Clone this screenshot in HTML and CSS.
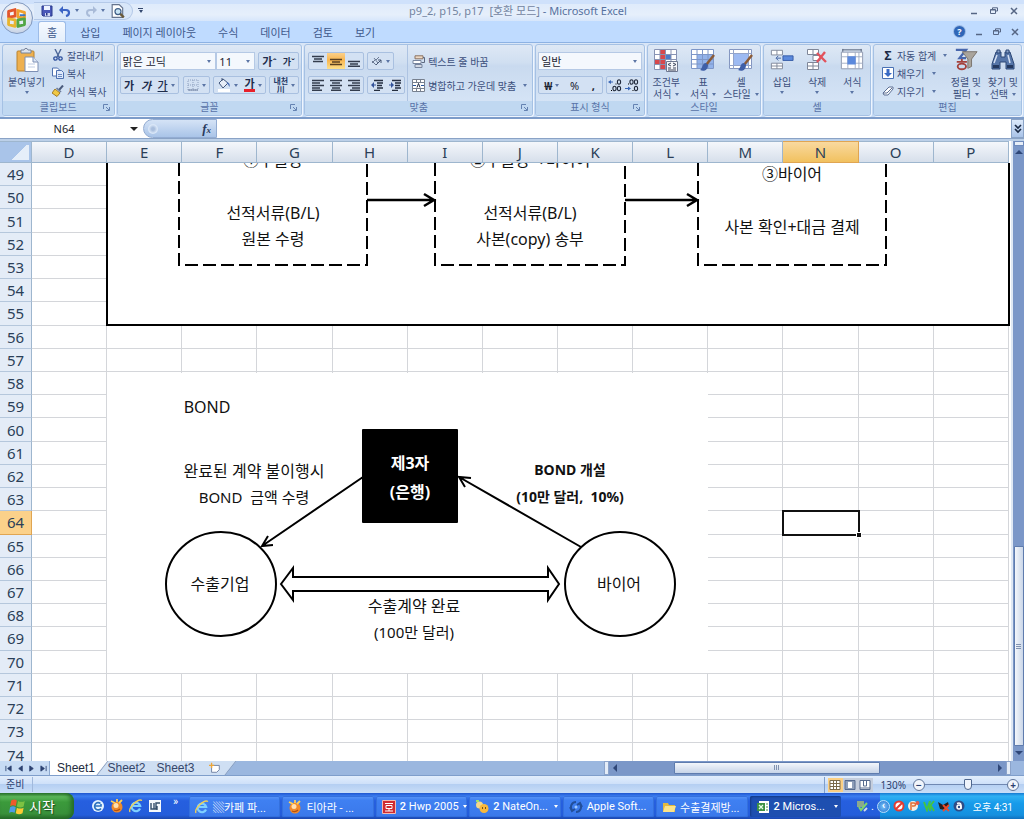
FILE: index.html
```html
<!DOCTYPE html>
<html lang="ko">
<head>
<meta charset="utf-8">
<title>p9_2, p15, p17 - Microsoft Excel</title>
<link rel="stylesheet" href="styles.css">
</head>
<body>
<svg class="defs" aria-hidden="true">
  <defs>
    <symbol id="save" viewBox="0 0 12 12"><path d="M1 1h10v10H2l-1-1z" fill="#4a58b8" stroke="#2b3a8c"/><path d="M3 1h6v4H3z" fill="#eef3ff"/><path d="M4 8h5v3H4z" fill="#cdd6f2"/><path d="M5 8h1.500v2.500H5z" fill="#26357f"/></symbol>
    <symbol id="undo" viewBox="0 0 12 12"><path d="M2 5h5c4 0 4 5 0 6" fill="none" stroke="#3b63c4" stroke-width="2.200"/><path d="M0 5l4-4v8z" fill="#3b63c4"/></symbol>
    <symbol id="redo" viewBox="0 0 12 12"><path d="M10 5H5c-4 0-4 5 0 6" fill="none" stroke="#a9bbd8" stroke-width="2"/><path d="M12 5L8 1v8z" fill="#a9bbd8"/></symbol>
    <symbol id="preview" viewBox="0 0 12 12"><path d="M1 .5h6l3 3v8H1z" fill="#fff" stroke="#66748e"/><circle cx="6" cy="6.500" r="2.600" fill="#c9e4f4" stroke="#3f5e86"/><path d="M8 8.500l3 3" stroke="#6a5a3a" stroke-width="2"/></symbol>
    <symbol id="paste" viewBox="0 0 24 24"><rect x="2" y="3" width="17" height="20" rx="1" fill="#eeb04f" stroke="#b9822f"/><path d="M6 5V2h3l1-1.500h2L13 2h3v3z" fill="#dce3ee" stroke="#77839a"/><path d="M10 9h8l5 5v9.500H10z" fill="#fff" stroke="#7c8fb4"/><path d="M18 9v5h5" fill="#dbe6f6" stroke="#7c8fb4"/><path d="M13 16h7M13 19h7" stroke="#c0cde4"/></symbol>
    <symbol id="cut" viewBox="0 0 12 12"><path d="M3 0l4 8M9 0L5 8" stroke="#4c6799" stroke-width="1.400"/><circle cx="3.500" cy="9.500" r="1.700" fill="none" stroke="#2c4f9d" stroke-width="1.300"/><circle cx="8.500" cy="9.500" r="1.700" fill="none" stroke="#2c4f9d" stroke-width="1.300"/></symbol>
    <symbol id="copy" viewBox="0 0 12 12"><path d="M.5 1h5l2 2v6h-7z" fill="#fff" stroke="#4f71b0"/><path d="M4.500 3.500h5l2 2v6h-7z" fill="#dfe9fa" stroke="#4f71b0"/><path d="M6 7.500h4M6 9.500h4" stroke="#6c8cc4"/></symbol>
    <symbol id="brush" viewBox="0 0 12 12"><path d="M7 5l4-4.500" stroke="#4b5b7c" stroke-width="2"/><path d="M3 4l5 4-3 3.500L0 8z" fill="#f1c843" stroke="#a07c26"/><path d="M4.500 3L9 7" stroke="#6e7e9c" stroke-width="1.600"/></symbol>
    <symbol id="borders" viewBox="0 0 12 12"><path d="M1 1h10v10H1zM6 1v10M1 6h10" fill="none" stroke="#8d9fbe" stroke-dasharray="1 1"/><path d="M1 11h10" stroke="#70809f"/></symbol>
    <symbol id="bucket" viewBox="0 0 14 14"><path d="M2 5l4-4 5 4-5 5z" fill="#e8eef8" stroke="#42577d"/><path d="M5 3V0" stroke="#42577d"/><path d="M10 4c3 1 3 3 2.500 5-1-1-1-3-3-4z" fill="#4c70b8"/><path d="M1 11h12v3H1z" fill="#fff"/></symbol>
    <symbol id="al-top" viewBox="0 0 12 12"><path d="M0 1.500h12M2 4h8M1 6.500h10" stroke="#333c4d" stroke-width="1.500"/></symbol>
    <symbol id="al-mid" viewBox="0 0 12 12"><path d="M0 4.500h12M2 7h8M0 9.500h12" stroke="#5a4022" stroke-width="1.500"/></symbol>
    <symbol id="al-bot" viewBox="0 0 12 12"><path d="M0 6.500h12M2 9h8M0 11.300h12" stroke="#333c4d" stroke-width="1.400"/></symbol>
    <symbol id="orient" viewBox="0 0 12 12"><path d="M1 6l4 4M3 3l4 5M1 8l4-4M5 5l3-3" fill="none" stroke="#6b7a94"/><path d="M5 10l5-5M10 8V5H7" fill="none" stroke="#445572"/></symbol>
    <symbol id="left" viewBox="0 0 12 12"><path d="M0 1.500h12M0 4h8M0 6.500h12M0 9h8M0 11.300h10" stroke="#333c4d" stroke-width="1.400"/></symbol>
    <symbol id="center" viewBox="0 0 12 12"><path d="M0 1.500h12M2 4h8M0 6.500h12M2 9h8M1 11.300h10" stroke="#333c4d" stroke-width="1.400"/></symbol>
    <symbol id="right" viewBox="0 0 12 12"><path d="M0 1.500h12M4 4h8M0 6.500h12M4 9h8M2 11.300h10" stroke="#333c4d" stroke-width="1.400"/></symbol>
    <symbol id="outdent" viewBox="0 0 12 12"><path d="M3 1.500h9M6 4h6M6 6.500h5M6 9h6M3 11.400h6" stroke="#252e40" stroke-width="1.300"/><path d="M0 6l3-3v6zM3 5.500h2v1H3z" fill="#34539a"/></symbol>
    <symbol id="indent" viewBox="0 0 12 12"><path d="M3 1.500h9M6 4h6M6 6.500h5M6 9h6M3 11.400h6" stroke="#252e40" stroke-width="1.300"/><path d="M5 6L2 3v6zM0 5.500h2v1H0z" fill="#34539a"/></symbol>
    <symbol id="wrap" viewBox="0 0 13 13"><path d="M3 .8h8v3H3z" fill="#eed9c4" stroke="#8a7262"/><path d="M1 5.500h8v3H1z" fill="#fff" stroke="#77859e"/><path d="M3 9.500h7v3H3z" fill="#d3d9e4" stroke="#77859e"/><path d="M11 2.500h1.500v5H9.500" fill="none" stroke="#5c6980"/></symbol>
    <symbol id="merge" viewBox="0 0 13 13"><path d="M.5.500h12v12H.5zM.5 3.500h12M.5 9.500h12M4.500.5v3M8.500.5v3M4.500 9.500v3M8.500 9.500v3" fill="#fff" stroke="#77808f"/><path d="M1 6.500h3M12 6.500H9" stroke="#24549c"/><path d="M5 8.500l1.500-4L8 8.500" fill="none" stroke="#222c44"/></symbol>
    <symbol id="inc-dec" viewBox="0 0 14 14"><path d="M0 4l3-2v4zM2 3.500h3v1H2z" fill="#3865b5"/><g fill="none" stroke="#222b3d" stroke-width="1.100"><ellipse cx="11" cy="4" rx="1.600" ry="2.200"/><ellipse cx="6.500" cy="10.500" rx="1.600" ry="2.200"/><ellipse cx="11" cy="10.500" rx="1.600" ry="2.200"/></g><path d="M7.500 5.500h1v1h-1zM3 12h1v1H3z"/></symbol>
    <symbol id="dec-dec" viewBox="0 0 14 14"><path d="M6 10.500l-3-2v4zM0 10h3v1H0z" fill="#3865b5"/><g fill="none" stroke="#222b3d" stroke-width="1.100"><ellipse cx="6.500" cy="4" rx="1.600" ry="2.200"/><ellipse cx="11" cy="4" rx="1.600" ry="2.200"/><ellipse cx="11" cy="10.500" rx="1.600" ry="2.200"/></g><path d="M3 5.500h1v1H3zM7.500 12h1v1h-1z"/></symbol>
    <symbol id="cond" viewBox="0 0 24 24"><path d="M.5 1.500h22v20H.5z" fill="#fff"/><path d="M6 1.500h5v20H6z" fill="#d8484c"/><path d="M.5 11.500h6v5h-6z" fill="#d8484c"/><path d="M11 6h6v6h-6z" fill="#4c7cc8"/><path d="M.5 1.500h22v20H.5zM.5 6.500h22M.5 11.500h22M.5 16.500h22M6 1.500v20M11.500 1.500v20M17 1.500v20" fill="none" stroke="#8793b4"/><path d="M12.500 13.500h11v10h-11z" fill="#f5f6fa" stroke="#6e7890"/><path d="M17 15l-3 1.500 3 1.500M14 20h3M19 15l3 1.500-3 1.500M19 20h3M14 22h8" fill="none" stroke="#3c455a"/></symbol>
    <symbol id="tablefmt" viewBox="0 0 24 24"><path d="M.5 1.500h22v19H.5z" fill="#fff"/><path d="M6 6h16v15H6z" fill="#92b2ea"/><path d="M.5 1.500h22v19H.5zM.5 6.500h22M.5 11.500h22M.5 16h22M6 1.500v19M11.500 1.500v19M17 1.500v19" fill="none" stroke="#7d96c8"/><path d="M23 7l-8 10" stroke="#8b5b37" stroke-width="2.500"/><path d="M15 15c-4 0-3 5-6 7 4 2 8 0 8-5z" fill="#3f5fa8"/></symbol>
    <symbol id="cellstyle" viewBox="0 0 24 24"><path d="M.5 1.500h22v19H.5z" fill="#fff" stroke="#8496c0"/><path d="M.5 5.500h22M.5 17.500h22M4.500 1.500v19M19.500 1.500v19" stroke="#93a4ca"/><path d="M5 6h14v11H5z" fill="#9dbaf2"/><path d="M23 7l-8 10" stroke="#8b5b37" stroke-width="2.500"/><path d="M15 15c-4 0-3 5-6 7 4 2 8 0 8-5z" fill="#3f5fa8"/></symbol>
    <symbol id="insert" viewBox="0 0 26 24"><path d="M1.500 1.500h12v5h-12zM1.500 15.500h12v6h-12zM7.500 1.500v5M7.500 15.500v6M1.500 18.500h12" fill="#fff" stroke="#7f8798"/><path d="M14 7.500h11v5H14z" fill="#5b89dc" stroke="#355ba6"/><path d="M12 10H7M9 7.500L6.500 10 9 12.500" fill="none" stroke="#3c5d9e"/></symbol>
    <symbol id="delete" viewBox="0 0 24 24"><path d="M2.500 1.500h11v5h-11zM8 7.500h7v5H8zM2.500 14.500h11v7h-11zM8 1.500v5M8 14.500v7M2.500 18h11" fill="#fff" stroke="#7f8798"/><path d="M12 5l9 9M20 4l-8 10" stroke="#e2525c" stroke-width="2.400"/></symbol>
    <symbol id="format" viewBox="0 0 26 24"><path d="M1.500 3.500h23v18h-23z" fill="#fff" stroke="#8b96ac"/><path d="M1.500 8.500h23M1.500 15.500h23M8.500 3.500v18M16.500 3.500v18M20.500 3.500v18" stroke="#a0abc2"/><path d="M8 8h9v9H8z" fill="#5b89dc"/><path d="M3 1h20M3 0v3M23 0v3" stroke="#4c5870"/></symbol>
    <symbol id="fill" viewBox="0 0 12 12"><path d="M.5.500h11v11H.5z" fill="#fff" stroke="#4971b4"/><path d="M4.500 2h3v4H10l-4 4-4-4h2.500z" fill="#3a6bc4"/></symbol>
    <symbol id="eraser" viewBox="0 0 12 12"><path d="M1 8l6-6h4v2L6 10H2z" fill="#fff" stroke="#5c6f94"/><path d="M1 8h4l5-5" fill="none" stroke="#5c6f94"/></symbol>
    <symbol id="sort" viewBox="0 0 26 26"><path d="M2 2h11L6 11h7" fill="none" stroke="#4867ad" stroke-width="2.500"/><path d="M9 4h16l-6 8v8l-4 2v-10z" fill="#a9a49c" stroke="#77716a"/><path d="M3 15h11M8.500 12v3" stroke="#a4423c" stroke-width="2"/><ellipse cx="8.500" cy="20" rx="4.500" ry="3" fill="none" stroke="#a4423c" stroke-width="2"/></symbol>
    <symbol id="find" viewBox="0 0 24 24"><path d="M5 4h5v5h4V4h5l4 12v5h-8v-7H9v7H1v-5z" fill="#5575a8" stroke="#2d4877"/><path d="M6 2h3v3H6zM15 2h3v3h-3z" fill="#8ca4cb" stroke="#2d4877"/><path d="M3 15l3-8M17 7l2 8" stroke="#d4e0f3" stroke-width="1.500"/><path d="M2 17h6v3H2zM16 17h6v3h-6z" fill="#24395f"/></symbol>
    <symbol id="launch" viewBox="0 0 7 7"><path d="M.5 5V.5H5M3 3l3 3M6.500 3v3.500H3" fill="none" stroke="#6583b2"/></symbol>
    <symbol id="min" viewBox="0 0 8 8"><path d="M1 6.500h6" stroke="#566684" stroke-width="1.500"/></symbol>
    <symbol id="restore" viewBox="0 0 8 8"><path d="M2.500 2V.8h5V4H6M.5 2.500h5v4h-5zM.5 3h5" fill="none" stroke="#566684"/></symbol>
    <symbol id="close" viewBox="0 0 8 8"><path d="M1 1l6 6M7 1L1 7" stroke="#566684" stroke-width="1.500"/></symbol>
    <symbol id="ie" viewBox="0 0 14 14"><path d="M11 9.500A4.300 4.300 0 1 1 11.200 7H4" fill="none" stroke="#7fd0ff" stroke-width="2.200"/><path d="M1 13C-1 9 9-1 13 1.500" fill="none" stroke="#f2cf55" stroke-width="1.300"/></symbol>
    <symbol id="orange" viewBox="0 0 14 14"><circle cx="7" cy="8" r="5.500" fill="#f08a2c"/><circle cx="6" cy="6.500" r="2.500" fill="#ffe0b0"/><path d="M1 2l4 2M7 0v3M12 1L9 4" stroke="#ffcf54" stroke-width="1.800"/><path d="M4 11c2 1 4 1 6-1" fill="none" stroke="#b4510f" stroke-width="1.200"/></symbol>
    <symbol id="globe" viewBox="0 0 14 14"><circle cx="7" cy="7" r="6" fill="#e5f3ff"/><path d="M9.500 4.500A3.600 3.600 0 1 0 10 9.500M4 7h6V5" fill="none" stroke="#2c72be" stroke-width="1.600"/></symbol>
    <symbol id="wave" viewBox="0 0 14 14"><path d="M1 1h12v12H1z" fill="#f5f8fb"/><path d="M3 4v6h3V4M6 10h2V4h4M9 7v4" fill="none" stroke="#334d68" stroke-width="1.400"/></symbol>
    <symbol id="hwp" viewBox="0 0 14 14"><path d="M.5.500h13v13H.5z" fill="#cf2c31" stroke="#f3b9b0"/><path d="M3 3.500h8M4 5.500h6v3H4zM3 11h8M7 8.500V11" fill="none" stroke="#fff"/></symbol>
    <symbol id="nate" viewBox="0 0 14 14"><circle cx="4.500" cy="5" r="3.500" fill="#f4d88c"/><circle cx="9" cy="8.500" r="4.500" fill="#f8b83c"/><path d="M7 8h1M10 8h1" stroke="#4b3210" stroke-width="1.500"/><path d="M1 1h3" stroke="#9fe26a" stroke-width="2"/></symbol>
    <symbol id="apple" viewBox="0 0 14 14"><path d="M3 10A5 5 0 0 1 7 2M11 4a5 5 0 0 1-4 8M1 7l2 4 3-2M13 7l-2-4-3 2" fill="none" stroke="#224f9b" stroke-width="2"/><circle cx="7" cy="7" r="1.500" fill="#9ac6ff"/></symbol>
    <symbol id="folder" viewBox="0 0 14 14"><path d="M1 3h5l1 2h6v7H1z" fill="#e2b93f"/><path d="M3 6h11l-2 6H1z" fill="#fbe38a"/></symbol>
    <symbol id="excel" viewBox="0 0 14 14"><path d="M3 1h10v12H3z" fill="#fff"/><path d="M1 3h8v8H1z" fill="#3d9145"/><path d="M3 5l4 4M7 5L3 9" stroke="#e8ffe8" stroke-width="1.300"/><path d="M10 4h2M10 7h2M10 10h2" stroke="#3d9145"/></symbol>
    <symbol id="winflag" viewBox="0 0 16 16"><path d="M2 3c2-1 3-1 5 0L6 8C4 7 3 7 1 8z" fill="#ee5a2b"/><path d="M8 3.500c2 1 4 1 6 0l-1 5c-2 1-4 1-6 0z" fill="#7dc242"/><path d="M1 9c2-1 3-1 5 0l-1 5c-2-1-3-1-5 0z" fill="#4d9be8"/><path d="M7 9.500c2 1 4 1 6 0l-1 5c-2 1-4 1-6 0z" fill="#fcca34"/></symbol>
    <symbol id="t-pen" viewBox="0 0 12 12"><path d="M1 1h7v6H1z" fill="#8aa88e"/><path d="M3 7l2 3 6-7" fill="none" stroke="#7ed36e" stroke-width="2"/><path d="M8 11l3-3" stroke="#d2d9e8" stroke-width="2"/></symbol>
    <symbol id="t-no" viewBox="0 0 12 12"><circle cx="6" cy="6" r="4.500" fill="#fff" stroke="#e43b31" stroke-width="2"/><path d="M3 9l6-6" stroke="#e43b31" stroke-width="2"/></symbol>
    <symbol id="t-paint" viewBox="0 0 12 12"><circle cx="5" cy="6" r="5" fill="#f6efe2"/><path d="M3 10V3h3c2 0 2 3 0 3H4" fill="none" stroke="#e06f32" stroke-width="1.500"/><circle cx="9.500" cy="3" r="2" fill="#e75b47"/></symbol>
    <symbol id="t-v" viewBox="0 0 12 12"><path d="M1 2l3 8 3-9M7 11V6l4-5M8 6l3 5" fill="none" stroke="#43c443" stroke-width="2"/></symbol>
    <symbol id="t-x" viewBox="0 0 12 12"><path d="M0 2l5 3 5-3 1 4-4 4-5-1z" fill="#2a1d1d"/><path d="M5 5l6 6M11 5l-6 6" stroke="#ef4b2c" stroke-width="1.800"/></symbol>
    <symbol id="t-a" viewBox="0 0 12 12"><circle cx="6" cy="6" r="5.500" fill="#2f4c86"/><circle cx="6" cy="7" r="2" fill="none" stroke="#fff" stroke-width="1.500"/><path d="M4 3.500c3-1 4 0 4 2V9" fill="none" stroke="#fff" stroke-width="1.500"/></symbol>
    <symbol id="newtab" viewBox="0 0 14 12"><path d="M3 3h9v5l-3 3H3z" fill="#fff" stroke="#67799c"/><path d="M3 0v6M0 3h6" stroke="#eda63a" stroke-width="1.500"/></symbol>
  </defs>
</svg>

<div class="app">
  <header class="chrome">
    <button class="orb" aria-label="Office 단추"><svg viewBox="0 0 32 32"><g fill="none" stroke-width="3" stroke-linejoin="round"><path d="M7 9l7-2v7l-7 1z" stroke="#e2562b"/><path d="M17 8l7 2v6l-7-1z" stroke="#f0a02c"/><path d="M7 17l7 1v7l-7-2z" stroke="#e8b42f"/><path d="M17 18l7-1v6l-7 2z" stroke="#52a645"/></g><path d="M19 13h6" stroke="#3c78c8" stroke-width="2"/></svg></button>
    <div class="titlebar">
      <div class="qat">
        <button aria-label="저장"><svg class="i12"><use href="#save"/></svg></button>
        <button class="dd" aria-label="실행 취소"><svg class="i12"><use href="#undo"/></svg></button>
        <button class="dd dim" aria-label="다시 실행"><svg class="i12"><use href="#redo"/></svg></button>
        <button aria-label="인쇄 미리 보기"><svg class="i14"><use href="#preview"/></svg></button>
      </div>
      <button class="qat-more" aria-label="빠른 실행 도구 모음 사용자 지정"></button>
      <h1 class="title"><span class="doc">p9_2, p15, p17&nbsp; [호환 모드]</span> - Microsoft Excel</h1>
      <div class="winbtns">
        <button aria-label="최소화"><svg class="i8"><use href="#min"/></svg></button>
        <button aria-label="이전 크기로"><svg class="i8"><use href="#restore"/></svg></button>
        <button aria-label="닫기"><svg class="i8"><use href="#close"/></svg></button>
      </div>
    </div>
    <nav class="tabs">
      <button class="tab active">홈</button>
      <button class="tab">삽입</button>
      <button class="tab">페이지 레이아웃</button>
      <button class="tab">수식</button>
      <button class="tab">데이터</button>
      <button class="tab">검토</button>
      <button class="tab">보기</button>
      <div class="winbtns inner">
        <button aria-label="도움말" class="help">?</button>
        <button aria-label="창 최소화"><svg class="i8"><use href="#min"/></svg></button>
        <button aria-label="창 복원"><svg class="i8"><use href="#restore"/></svg></button>
        <button aria-label="창 닫기"><svg class="i8"><use href="#close"/></svg></button>
      </div>
    </nav>
  </header>

  <section class="ribbon" aria-label="홈">
    <div class="group g-clip">
      <div class="body">
        <button class="big"><svg class="i24"><use href="#paste"/></svg><span>붙여넣기</span><i class="caret"></i></button>
        <div class="stack">
          <button class="small"><svg class="i12"><use href="#cut"/></svg>잘라내기</button>
          <button class="small"><svg class="i12"><use href="#copy"/></svg>복사</button>
          <button class="small"><svg class="i12"><use href="#brush"/></svg>서식 복사</button>
        </div>
      </div>
      <div class="cap">클립보드<svg class="launch"><use href="#launch"/></svg></div>
    </div>
    <div class="group g-font">
      <div class="body rows">
        <div class="row">
          <span class="sel grow"><select aria-label="글꼴"><option>맑은 고딕</option></select></span>
          <span class="sel size"><select aria-label="글꼴 크기"><option>11</option></select></span>
          <div class="set push"><button class="glyph up" aria-label="글꼴 크기 크게">가</button><button class="glyph down" aria-label="글꼴 크기 작게">가</button></div>
        </div>
        <div class="row spread">
          <div class="set"><button class="glyph bold">가</button><button class="glyph ital">가</button><button class="glyph und dd">가</button></div>
          <div class="set"><button class="dd" aria-label="테두리"><svg class="i12"><use href="#borders"/></svg></button></div>
          <div class="set"><button class="dd" aria-label="채우기 색"><svg class="i14"><use href="#bucket"/></svg></button><button class="glyph red dd"><span>가</span></button></div>
          <div class="set"><button class="ruby dd"><span>내천</span><span>川</span></button></div>
        </div>
      </div>
      <div class="cap">글꼴<svg class="launch"><use href="#launch"/></svg></div>
    </div>
    <div class="group g-align">
      <div class="body">
        <div class="rows">
          <div class="row">
            <div class="set"><button aria-label="위쪽 맞춤"><svg class="i12"><use href="#al-top"/></svg></button><button class="on" aria-label="가운데 맞춤"><svg class="i12"><use href="#al-mid"/></svg></button><button aria-label="아래쪽 맞춤"><svg class="i12"><use href="#al-bot"/></svg></button></div>
            <div class="set"><button class="dd" aria-label="방향"><svg class="i12"><use href="#orient"/></svg></button></div>
          </div>
          <div class="row">
            <div class="set"><button aria-label="왼쪽"><svg class="i12"><use href="#left"/></svg></button><button aria-label="가운데"><svg class="i12"><use href="#center"/></svg></button><button aria-label="오른쪽"><svg class="i12"><use href="#right"/></svg></button></div>
            <div class="set"><button aria-label="내어쓰기"><svg class="i12"><use href="#outdent"/></svg></button><button aria-label="들여쓰기"><svg class="i12"><use href="#indent"/></svg></button></div>
          </div>
        </div>
        <div class="rows sep">
          <div class="row"><button class="small"><svg class="i13"><use href="#wrap"/></svg>텍스트 줄 바꿈</button></div>
          <div class="row"><button class="small dd"><svg class="i13"><use href="#merge"/></svg>병합하고 가운데 맞춤</button></div>
        </div>
      </div>
      <div class="cap">맞춤<svg class="launch"><use href="#launch"/></svg></div>
    </div>
    <div class="group g-num">
      <div class="body rows">
        <div class="row"><span class="sel grow"><select aria-label="표시 형식"><option>일반</option></select></span></div>
        <div class="row spread">
          <div class="set num"><button class="dd strong">₩</button><button>%</button><button class="strong">,</button></div>
          <div class="set"><button aria-label="자릿수 늘림"><svg class="i14"><use href="#inc-dec"/></svg></button><button aria-label="자릿수 줄임"><svg class="i14"><use href="#dec-dec"/></svg></button></div>
        </div>
      </div>
      <div class="cap">표시 형식<svg class="launch"><use href="#launch"/></svg></div>
    </div>
    <div class="group g-style">
      <div class="body even">
        <button class="big"><svg class="i24"><use href="#cond"/></svg><span>조건부</span><span class="dd">서식</span></button>
        <button class="big"><svg class="i24"><use href="#tablefmt"/></svg><span>표</span><span class="dd">서식</span></button>
        <button class="big"><svg class="i24"><use href="#cellstyle"/></svg><span>셀</span><span class="dd">스타일</span></button>
      </div>
      <div class="cap">스타일</div>
    </div>
    <div class="group g-cell">
      <div class="body even">
        <button class="big"><svg class="i24"><use href="#insert"/></svg><span>삽입</span><i class="caret"></i></button>
        <button class="big"><svg class="i24"><use href="#delete"/></svg><span>삭제</span><i class="caret"></i></button>
        <button class="big"><svg class="i24"><use href="#format"/></svg><span>서식</span><i class="caret"></i></button>
      </div>
      <div class="cap">셀</div>
    </div>
    <div class="group g-edit">
      <div class="body">
        <div class="stack">
          <button class="small dd"><b class="sigma">Σ</b>자동 합계</button>
          <button class="small dd"><svg class="i12"><use href="#fill"/></svg>채우기</button>
          <button class="small dd"><svg class="i12"><use href="#eraser"/></svg>지우기</button>
        </div>
        <button class="big"><svg class="i24"><use href="#sort"/></svg><span>정렬 및</span><span class="dd">필터</span></button>
        <button class="big"><svg class="i24"><use href="#find"/></svg><span>찾기 및</span><span class="dd">선택</span></button>
      </div>
      <div class="cap">편집</div>
    </div>
  </section>

  <div class="formula">
    <input class="namebox" aria-label="이름 상자" value="N64">
    <i class="caret dark"></i>
    <button class="fx" aria-label="함수 삽입"><span class="knob"></span><em>f<small>x</small></em></button>
    <input class="fbar" aria-label="수식 입력줄">
    <button class="expand" aria-label="수식 입력줄 확장"><svg viewBox="0 0 8 10"><path d="M1 1l3 3 3-3M1 5l3 3 3-3" fill="none" stroke="#1b2a45" stroke-width="1.600"/></svg></button>
  </div>

  <main class="work">
    <div class="sheet">
      <table class="grid"><thead><tr id="cols"></tr></thead></table>
      <div class="cells">
        <table class="grid rowsgrid"><tbody id="rows"></tbody></table>
        <svg class="drawing" width="980" height="600" viewBox="32 163 980 600">
          <rect x="107" y="150" width="902" height="175" fill="#fff" stroke="#000" stroke-width="2"/>
          <rect x="107" y="373" width="601" height="300" fill="#fff"/>
          <g fill="none" stroke="#000" stroke-width="2" stroke-dasharray="13 5">
            <path d="M179 163v102h188V163M435 163v102h190V163M698 163v102h188V163"/>
          </g>
          <g fill="none" stroke="#000" stroke-width="2.500">
            <path d="M367 200h66M424 194l10 6-10 6M625 200h71M687 194l10 6-10 6"/>
          </g>
          <g fill="none" stroke="#000" stroke-width="2">
            <path d="M363 477L262 546M268 536l-6 10 11-1M581 547L459 477M465 487l-6-10 12 1"/>
            <ellipse cx="221" cy="584" rx="55" ry="52"/>
            <ellipse cx="620" cy="584" rx="55" ry="52"/>
            <path d="M281 584l12-16v9h255v-9l11 16-11 16v-9H293v9z"/>
          </g>
          <rect x="362" y="429" width="96" height="94" rx="1"/>
          <g class="dtext" text-anchor="middle">
            <text x="273" y="166">①수출상</text>
            <text x="530" y="166">②수출상→바이어</text>
            <text x="273" y="219">선적서류(B/L)</text>
            <text x="273" y="245">원본 수령</text>
            <text x="530" y="219">선적서류(B/L)</text>
            <text x="530" y="245">사본(copy) 송부</text>
            <text x="792" y="180">③바이어</text>
            <text x="792" y="233">사본 확인+대금 결제</text>
            <text x="207" y="413">BOND</text>
            <text x="254" y="477">완료된 계약 불이행시</text>
            <text x="254" y="503" class="s15">BOND&#160; 금액 수령</text>
            <text x="220" y="590">수출기업</text>
            <text x="619" y="590">바이어</text>
            <text x="414" y="612">수출계약 완료</text>
            <text x="414" y="638" class="s15">(100만 달러)</text>
            <text x="570" y="475" class="s14">BOND 개설</text>
            <text x="570" y="502" class="s14">(10만 달러,&#160; 10%)</text>
            <text x="410" y="469" class="inv">제3자</text>
            <text x="410" y="498" class="inv">(은행)</text>
          </g>
        </svg>
      </div>
    </div>
    <div class="vscroll"><span class="split"></span><i class="arr up"></i><span class="vtrack"><span class="vthumb"></span></span><i class="arr down"></i></div>
  </main>

  <div class="sheetbar">
    <div class="navs">
      <button aria-label="처음"><svg viewBox="0 0 8 8"><path d="M1 1v6M7 1L3 4l4 3z"/></svg></button>
      <button aria-label="이전"><svg viewBox="0 0 8 8"><path d="M6 1L2 4l4 3z"/></svg></button>
      <button aria-label="다음"><svg viewBox="0 0 8 8"><path d="M2 1l4 3-4 3z"/></svg></button>
      <button aria-label="마지막"><svg viewBox="0 0 8 8"><path d="M1 1l4 3-4 3zM7 1v6"/></svg></button>
    </div>
    <button class="stab active"><span>Sheet1</span></button>
    <button class="stab"><span>Sheet2</span></button>
    <button class="stab"><span>Sheet3</span></button>
    <button class="stab new" aria-label="워크시트 삽입"><span><svg class="i12"><use href="#newtab"/></svg></span></button>
    <div class="filler"></div>
    <div class="hscroll"><span class="grip"></span><i class="arr lft"></i><span class="htrack"><span class="hthumb"></span></span><i class="arr rgt"></i><span class="grip"></span></div>
  </div>

  <footer class="status">
    <span class="ready">준비</span>
    <div class="views">
      <button class="on" aria-label="기본"><svg viewBox="0 0 14 12"><path d="M2 1.500h10v9H2zM2 4.500h10M2 7.500h10M5.500 1.500v9M8.500 1.500v9" fill="#fff" stroke="#79684a"/></svg></button>
      <button aria-label="페이지 레이아웃"><svg viewBox="0 0 14 12"><path d="M2 1.500h10v9H2z" fill="#8e9eb8" stroke="#566a8e"/><path d="M5 3h4v6H5z" fill="#fff"/></svg></button>
      <button aria-label="페이지 나누기"><svg viewBox="0 0 14 12"><path d="M2 1.500h10v9H2z" fill="#fff" stroke="#566a8e"/><path d="M5.500 1v6h3V1M2 9h10" fill="none" stroke="#566a8e"/></svg></button>
    </div>
    <span class="pct">130%</span>
    <button class="zoom" aria-label="축소">−</button>
    <input class="slider" type="range" min="0" max="100" value="53" aria-label="확대/축소">
    <button class="zoom" aria-label="확대">+</button>
  </footer>

  <nav class="taskbar">
    <button class="start"><svg class="i16"><use href="#winflag"/></svg>시작</button>
    <div class="quick">
      <button aria-label="바탕 화면 보기"><svg class="i14"><use href="#globe"/></svg></button>
      <button aria-label="알약"><svg class="i14"><use href="#orange"/></svg></button>
      <button aria-label="Internet Explorer"><svg class="i14"><use href="#ie"/></svg></button>
      <button aria-label="편집기"><svg class="i14"><use href="#wave"/></svg></button>
      <span class="more">»</span>
    </div>
    <div class="tasks">
      <button class="task"><svg class="i14"><use href="#ie"/></svg><span>▒카페 파...</span></button>
      <button class="task"><svg class="i14"><use href="#orange"/></svg><span>티아라 - ...</span></button>
      <button class="task dd"><svg class="i14"><use href="#hwp"/></svg><span><b>2</b> Hwp 2005</span></button>
      <button class="task dd"><svg class="i14"><use href="#nate"/></svg><span><b>2</b> NateOn...</span></button>
      <button class="task"><svg class="i14"><use href="#apple"/></svg><span>Apple Soft...</span></button>
      <button class="task"><svg class="i14"><use href="#folder"/></svg><span>수출결제방...</span></button>
      <button class="task dd current"><svg class="i14"><use href="#excel"/></svg><span><b>2</b> Micros...</span></button>
    </div>
    <div class="lang"><svg class="i12"><use href="#t-pen"/></svg><span>.</span></div>
    <div class="tray">
      <button class="chev" aria-label="숨겨진 아이콘 표시">‹</button>
      <svg class="i12"><use href="#t-no"/></svg><svg class="i12"><use href="#t-paint"/></svg><svg class="i12"><use href="#t-v"/></svg><svg class="i12"><use href="#t-x"/></svg><svg class="i12"><use href="#t-a"/></svg>
      <time>오후 4:31</time>
    </div>
  </nav>
</div>
<script src="grid.js"></script>
</body>
</html>
```

FILE: styles.css
```css
* { box-sizing: border-box; }
body { margin: 0; font-family: "Noto Sans", "Noto Sans CJK KR", sans-serif; font-size: 11px; color: #3c4f7c; }
button, input, select { font: inherit; color: inherit; border: 0; background: none; padding: 0; margin: 0; min-width: 0; border-radius: 0; outline: 0; }
button { display: flex; align-items: center; justify-content: center; white-space: nowrap; cursor: default; }
svg { display: block; flex: none; }
.defs { position: absolute; width: 0; height: 0; }
.i8 { width: 8px; height: 8px; }
.i12 { width: 12px; height: 12px; }
.i13 { width: 13px; height: 13px; }
.i14 { width: 14px; height: 14px; }
.i16 { width: 18px; height: 18px; }
.i24 { width: 24px; height: 24px; }
.app { display: flex; flex-direction: column; height: 100vh; min-height: 400px; overflow: hidden; background: #bfdbff; }

.caret, .dd::after { content: ""; display: block; flex: none; border: 2px solid transparent; border-top: 3px solid #5b75a5; border-bottom: 0; }
.dd::after { margin-left: 4px; }

/* title bar and tabs */
.chrome { position: relative; flex: none; }
.orb { position: absolute; left: 1px; top: 2px; width: 32px; height: 32px; border-radius: 50%; background: radial-gradient(circle at 50% 30%, #fff, #dce4f0 60%, #b5c4dc); border: 1px solid #8199bf; z-index: 1; }
.orb svg { width: 30px; height: 30px; }
.titlebar { display: flex; align-items: center; height: 21px; padding-left: 34px; background: linear-gradient(#cfe1fb 0 18%, #dfebfb 20%, #e6effb 70%, #d6e6fb); }
.qat { display: flex; align-items: center; gap: 6px; height: 18px; width: 99px; padding-left: 7px; border: 1px solid #b4c9e8; border-left: 0; border-radius: 0 9px 9px 0; background: #d9e7f9; }
.qat-more { width: 5px; height: 6px; margin-left: 5px; border-top: 1px solid #33476e; }
.qat-more::after { content: ""; border: 2px solid transparent; border-top: 3px solid #33476e; border-bottom: 0; }
.title { flex: 1; margin: 0; font-size: 11px; font-weight: 400; line-height: 20px; text-align: center; color: #56719f; padding-right: 143px; white-space: pre; }
.doc { color: #7384a0; }
.winbtns { display: flex; gap: 12px; padding-right: 6px; align-items: center; }
.winbtns.inner { margin-left: auto; padding-right: 5px; gap: 10px; }
.titlebar .winbtns { margin-left: -66px; }
.help { width: 11px; height: 11px; border-radius: 50%; background: #2f66b8; color: #fff; font-size: 9px; font-weight: 700; box-shadow: 0 0 0 1px #9bb9e4; }
.tabs { display: flex; height: 21px; padding-left: 38px; background: #bfdbff; color: #40588c; }
.tab { height: 21px; padding: 0 11px; }
.tab.active { margin-right: 3px; padding: 0 8px; border: 1px solid #9dbce8; border-bottom: 0; border-radius: 3px 3px 0 0; background: linear-gradient(#f6faff, #e3eefb); }

/* ribbon */
.ribbon { display: flex; gap: 2px; flex: none; height: 77px; padding: 1px 2px; border-top: 1px solid #8db2e3; border-bottom: 2px solid #7d9cc9; background: linear-gradient(#d9e6f7, #c4daf5); font-size: 10px; }
.group { display: flex; flex-direction: column; border: 1px solid #a5c1e4; border-radius: 3px; box-shadow: 1px 1px 0 #eef5fe; overflow: hidden; background: linear-gradient(#dee8f5, #d0dff1 25%, #c9daef 30%, #d9e7f8); }
.g-clip { flex: 112 1 0; }
.g-font { flex: 186 1 0; }
.g-align { flex: 230 1 0; }
.g-num { flex: 109 1 0; }
.g-style { flex: 114 1 0; }
.g-cell { flex: 107 1 0; }
.g-edit { flex: 149 1 0; }
.body { display: flex; flex: 1; min-height: 0; padding: 0 3px; }
.cap { position: relative; flex: none; height: 14px; line-height: 13px; text-align: center; color: #5873a8; background: #c0d8f1; }
.launch { position: absolute; right: 4px; top: 3px; width: 7px; height: 7px; }
.big { flex-direction: column; justify-content: flex-start; line-height: 12px; padding-top: 3px; min-width: 41px; }
.big > svg { margin-bottom: 4px; }
.big .caret { margin-top: 3px; }
.big .dd { display: flex; align-items: center; }
.even { justify-content: space-around; padding: 0; }
.even .big { min-width: 34px; }
.stack { display: flex; flex-direction: column; padding: 1px 0 0 5px; }
.small { height: 18px; gap: 3px; justify-content: flex-start; }
.g-edit .stack { padding-left: 5px; margin-right: auto; }
.g-edit .big { min-width: 37px; }
.sigma { width: 12px; text-align: center; font-size: 12px; color: #1b2a45; }
.rows { display: flex; flex-direction: column; gap: 6px; padding-top: 7px; }
.body.rows { padding: 7px 2px 0; }
.row { display: flex; height: 18px; gap: 3px; }
.spread { justify-content: space-between; }
.sep { margin-left: 2px; padding-left: 4px; border-left: 1px solid #adc3e2; }
.sep .row { align-items: center; }
.set { display: flex; border: 1px solid #a9c0e0; border-radius: 2px; background: #d3e1f3; }
.set button { padding: 0 3px; min-width: 17px; }
.set .dd::after { margin-left: 3px; }
.set .on { background: linear-gradient(#fbd08a, #f8b54f 45%, #fde08c); }
.push { margin-left: auto; }
.glyph { font-size: 11px; color: #1f2d4c; }
.glyph.bold, .glyph.up, .glyph.red { font-weight: 700; }
.glyph.up::after { content: "ˆ"; font-size: 9px; }
.glyph.down { font-size: 9px; font-weight: 700; }
.glyph.down::after { content: "ˇ"; font-size: 8px; }
.glyph.ital { font-style: italic; font-weight: 700; }
.glyph.und { text-decoration: underline; font-weight: 500; }
.glyph.red span { line-height: 11px; border-bottom: 3px solid #e8202a; }
.ruby { display: grid; grid-template-columns: auto auto; align-content: center; font-size: 8px; line-height: 8px; font-weight: 700; color: #263a66; }
.ruby span { grid-column: 1; }
.ruby::after { grid-column: 2; grid-row: 1 / 3; }
.sel { position: relative; display: flex; background: #f4f8fd; border: 1px solid #b5c9e5; color: #1a2230; font-size: 11px; }
.sel.grow { flex: 1; }
.sel.size { width: 39px; margin-left: -3px; }
.sel select { appearance: none; width: 100%; padding: 0 10px 0 2px; }
.sel::after { content: ""; position: absolute; right: 4px; top: 7px; border: 2px solid transparent; border-top: 3px solid #5b75a5; border-bottom: 0; }
.num { flex: 1; justify-content: space-between; color: #1a2230; font-size: 11px; }
.g-num .set button { padding: 0 1px; }
.g-num .set.num button { padding: 0 5px; }
.strong { font-weight: 700; }

/* formula bar */
.formula { display: flex; align-items: center; flex: none; height: 20px; background: #fff; border-bottom: 1px solid #8aa3c6; }
.namebox { width: 128px; text-align: center; color: #20242c; }
.caret.dark { border-width: 4px 4px 0; border-top-color: #222; margin: 0 5px 0 2px; }
.fx { width: 74px; height: 19px; justify-content: space-between; padding: 0 5px 0 4px; border-radius: 10px 0 0 10px; background: linear-gradient(#d5e3f6, #a9c4e8); border: 1px solid #93acd2; }
.knob { width: 10px; height: 10px; border-radius: 50%; background: radial-gradient(#a9bedd 20%, #d9e6f7 60%); }
.fx em { font-family: "Liberation Serif", serif; font-size: 13px; font-weight: 700; color: #2a3a5c; }
.fx small { font-size: 9px; }
.fbar { flex: 1; height: 18px; }
.expand { width: 13px; height: 19px; background: linear-gradient(#dce9fa, #a9c3e8); border: 1px solid #8aa3c6; }
.expand svg { width: 8px; height: 10px; }

/* worksheet */
.work { display: flex; flex: 1; min-height: 0; padding-top: 2px; background: #bcd0e8; }
.sheet { flex: 1; display: flex; flex-direction: column; min-width: 0; background: #fff; }
.grid { table-layout: fixed; border-collapse: separate; border-spacing: 0; width: calc(100% - 2px); font-size: 15px; line-height: 18px; }
.grid th { font-weight: 400; padding: 0; color: #2b3f58; }
.grid th:first-child { width: 32px; }
.grid thead th { height: 22px; background: linear-gradient(#f4f7fb, #d6dfeb); border: solid #9eb6ce; border-width: 1px 1px 1px 0; }
.grid thead th.hot { background: linear-gradient(#f9d99f, #f1c15f); border-color: #e0a552; }
.grid thead th:first-child { background: linear-gradient(135deg, transparent 50%, #e5eef9 50%) no-repeat 9px 3px / 20px 15px, #a9c4e9; }
.cells { position: relative; flex: 1; overflow: hidden; }
.rowsgrid { height: calc(100% + 6px); }
.rowsgrid th { background: #e4ecf7; border-right: 1px solid #9eb6ce; border-bottom: 1px solid #b5c7dc; }
.rowsgrid th.hot { background: #fbd18a; border-color: #e0a552; }
.rowsgrid td { padding: 0; border-right: 1px solid #d4d6da; border-bottom: 1px solid #d4d6da; position: relative; }
.cursor { position: absolute; inset: -1px -2px -2px -1px; border: 2px solid #111; z-index: 1; }
.cursor::after { content: ""; position: absolute; right: -3px; bottom: -3px; width: 4px; height: 4px; background: #111; box-shadow: 0 0 0 1px #fff; }
.drawing { position: absolute; left: 32px; top: 0; }
.dtext { font-size: 16px; fill: #111; }
.dtext .s15 { font-size: 15px; }
.dtext .s14 { font-size: 14px; font-weight: 700; }
.dtext .inv { fill: #fff; font-weight: 700; }
.vscroll { display: flex; flex-direction: column; align-items: center; width: 13px; background: #7b97c8; border-left: 2px solid #dfe8f4; padding-bottom: 2px; }
.split { width: 10px; height: 5px; background: #e7eef8; border: 1px solid #6f8bbd; }
.arr { flex: none; border: 4px solid transparent; }
.arr.up { border-top: 0; border-bottom-color: #2f4778; margin: 4px 0; }
.arr.down { border-bottom: 0; border-top-color: #2f4778; margin: 5px 0 4px; }
.vtrack { flex: 1; width: 10px; display: flex; flex-direction: column; justify-content: flex-end; }
.vthumb { height: 34%; background: linear-gradient(90deg, #f3f6fb, #cbd7e9); border: 1px solid #5f7cae; border-radius: 1px; display: flex; align-items: center; justify-content: center; }
.vthumb::after { content: ""; width: 5px; height: 5px; background: repeating-linear-gradient(#8092b0 0 1px, transparent 1px 2px); }

.sheetbar { display: flex; flex: none; height: 14px; background: #9bb7df; font-family: "Liberation Sans", sans-serif; font-size: 12px; overflow: hidden; }
.navs { display: flex; width: 50px; padding-left: 3px; background: #c7dbf4; border-right: 1px solid #8ea9cf; z-index: 3; }
.navs button { width: 12px; }
.navs svg { width: 7px; height: 7px; fill: #2c4170; stroke: #2c4170; }
.stab { position: relative; width: 49px; z-index: 1; padding-left: 6px; color: #35466a; }
.stab::before { content: ""; position: absolute; inset: 0 -4px 0 0; background: #cfdff3; border-right: 1px solid #7d95bb; transform: skewX(-38deg); }
.stab:nth-child(2)::before { left: -10px; }
.stab span { position: relative; }
.stab.active { z-index: 2; color: #222c40; padding-left: 3px; }
.stab.active::before { background: #fff; }
.stab.new { width: 30px; }
.filler { flex: 376 1 0; }
.hscroll { display: flex; align-items: center; flex: 406 1 0; background: #7b97c8; margin-right: 13px; }
.grip { width: 5px; height: 14px; background: #e4ecf7; border: 1px solid #8ba3ca; }
.arr.lft { border-left: 0; border-right-color: #2f4778; margin: 0 4px; }
.arr.rgt { border-right: 0; border-left-color: #2f4778; margin: 0 4px; }
.htrack { flex: 1; height: 13px; padding: 0 28% 0 13%; }
.hthumb { display: flex; align-items: center; justify-content: center; height: 12px; background: linear-gradient(#f3f6fb, #c7d4e8); border: 1px solid #5f7cae; border-radius: 1px; }
.hthumb::after { content: ""; width: 6px; height: 5px; background: repeating-linear-gradient(90deg, #8092b0 0 1px, transparent 1px 2px); }

/* status bar */
.status { display: flex; align-items: center; flex: none; height: 18px; padding-right: 5px; background: linear-gradient(#e2edfc, #cfe1f9 45%, #b5cff2 50%, #c9def8); border-top: 1px solid #7f9ecb; color: #2c4170; }
.ready { width: 33px; height: 15px; line-height: 14px; padding-left: 6px; border-right: 1px solid #a1b9dc; font-size: 10px; }
.views { display: flex; margin-left: auto; border-left: 1px solid #7f9ecb; padding: 1px 0 1px 3px; }
.views button { width: 15px; height: 14px; background: #c5cedd; }
.views .on { background: #fbcf83; }
.views svg { width: 14px; height: 12px; }
.pct { font-size: 10px; padding: 0 7px 0 8px; }
.zoom { width: 12px; height: 12px; border: 1px solid #5f7499; border-radius: 50%; background: #f1f5fb; font-size: 10px; line-height: 10px; font-weight: 700; }
.slider { appearance: none; width: 82px; height: 14px; background: linear-gradient(#7088b2, #7088b2) no-repeat center / 100% 1px; }
.slider::-webkit-slider-thumb { appearance: none; width: 8px; height: 11px; background: #eef3fb; border: 1px solid #4f678f; border-radius: 1px 1px 4px 4px; }

/* taskbar */
.taskbar { display: flex; flex: none; height: 26px; background: linear-gradient(#1f56cf, #3b7df0 12%, #265fdf 30%, #245ddb 85%, #1c48ad); font-family: "Roboto", "Noto Sans CJK KR", sans-serif; font-size: 11px; color: #fff; }
.start { width: 74px; gap: 2px; padding-right: 10px; border-radius: 0 8px 8px 0; font-size: 14px; background: linear-gradient(#2f7a2f, #5cb85a 14%, #3b9a3b 35%, #38903a 80%, #256a28); text-shadow: 1px 1px 1px #1b4a1c; box-shadow: inset -3px 0 4px #256a28; }
.quick { display: flex; align-items: center; gap: 5px; width: 115px; padding-left: 17px; }
.more { align-self: flex-start; line-height: 18px; margin-left: 6px; }
.tasks { display: flex; gap: 2px; flex: 1; min-width: 0; padding: 3px 4px 2px 0; }
.task { flex: 1 1 0; justify-content: flex-start; gap: 4px; padding: 0 3px 0 6px; border-radius: 2px; background: linear-gradient(#5b97f8, #3f80f2 20%, #3a78ea); box-shadow: inset 0 0 0 1px #3470dd; overflow: hidden; }
.task.dd::after { margin-left: auto; border-top-color: #fff; }
.task.current { background: #1e4fb0; box-shadow: inset 1px 1px 2px #143a87; }
.task b { font-weight: 500; }
.lang { display: flex; align-items: center; width: 35px; gap: 3px; padding-left: 11px; }
.tray { display: flex; align-items: center; gap: 3px; width: 144px; padding-right: 11px; background: linear-gradient(#1579d2, #2fb0f3 12%, #179bea 40%, #1590df 85%, #1170bd); }
.tray time { margin-left: auto; font-size: 10px; white-space: nowrap; }
.chev { width: 13px; height: 13px; margin-left: -3px; border-radius: 50%; background: radial-gradient(#7cc1f8, #2173cf); border: 1px solid #b9dcfb; font-weight: 700; line-height: 10px; }
```

FILE: grid.js
```js
const columns = "DEFGHIJKLMNOP".split("");
const head = document.getElementById("cols");
head.innerHTML = '<th aria-label="모두 선택"></th>' +
  columns.map(c => `<th${c === "N" ? ' class="hot"' : ""}>${c}</th>`).join("");

const body = document.getElementById("rows");
for (let r = 49; r <= 74; r++) {
  const row = document.createElement("tr");
  row.innerHTML = `<th${r === 64 ? ' class="hot"' : ""}>${r}</th>` +
    columns.map(c => `<td>${c === "N" && r === 64 ? '<div class="cursor"></div>' : ""}</td>`).join("");
  body.appendChild(row);
}
```
